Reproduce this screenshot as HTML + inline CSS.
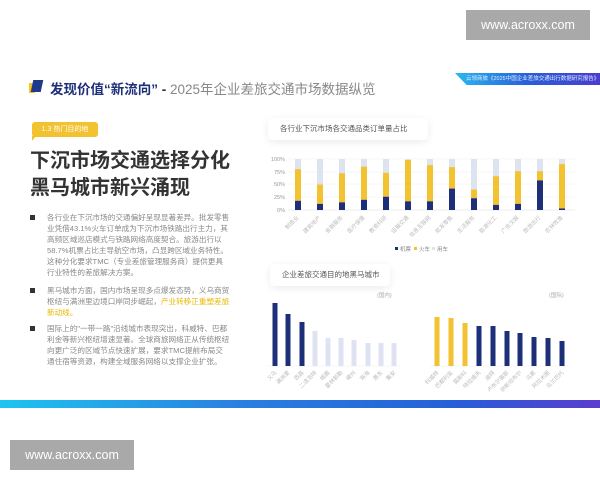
<!DOCTYPE html>
<html><head><meta charset="utf-8"><style>
body{margin:0;width:600px;height:480px;background:#fff;position:relative;overflow:hidden;font-family:"Liberation Sans","Noto Sans CJK SC",sans-serif;}
.abs{position:absolute;}
.wm{background:#a9a9a9;color:#fff;font-size:12.5px;text-align:center;line-height:30px;}
.bul{position:absolute;left:30px;width:200px;font-size:7.6px;line-height:11px;color:#888;}
.bul i{position:absolute;left:0;top:3px;width:5px;height:5px;background:#333;}
.bul p{margin:0 0 0 17px;}
</style></head><body>
<div class="abs wm" style="left:466px;top:10px;width:124px;height:30px;">www.acroxx.com</div>
<div class="abs wm" style="left:10px;top:440px;width:124px;height:30px;">www.acroxx.com</div>

<div class="abs" style="left:29px;top:83px;width:6px;height:10px;background:#f5c518;"></div>
<div class="abs" style="left:32px;top:80px;width:10px;height:12px;background:#1e3a8a;transform:skewX(-12deg);"></div>
<div class="abs" style="left:50px;top:78px;font-size:13.5px;white-space:nowrap;color:#888;"><b style="color:#1e2f7a;">发现价值“新流向”</b> <b style="color:#333">-</b> 2025年企业差旅交通市场数据纵览</div>
<div class="abs" style="left:455px;top:73px;width:145px;height:12px;background:linear-gradient(90deg,#2bb7f0,#2a5fd8,#4b3ccf);clip-path:polygon(0 0,100% 0,100% 100%,8% 100%);"></div>
<div class="abs" style="left:466px;top:74px;font-size:5.5px;color:#dfefff;white-space:nowrap;">云领商旅《2025中国企业差旅交通出行数据研究报告》</div>

<div class="abs" style="left:32px;top:122px;width:66px;height:15px;background:#f2c230;border-radius:3px;color:#fff;font-size:7px;line-height:15px;text-align:center;">1.3 热门目的地</div>
<div class="abs" style="left:32px;top:136px;width:0;height:0;border-left:4px solid #f2c230;border-bottom:5px solid transparent;"></div>
<div class="abs" style="left:30px;top:148px;font-size:20px;font-weight:bold;color:#333;line-height:27px;white-space:nowrap;">下沉市场交通选择分化<br>黑马城市新兴涌现</div>

<div class="bul" style="top:212px;"><i></i><p>各行业在下沉市场的交通偏好呈现显著差异。批发零售业凭借43.1%火车订单成为下沉市场铁路出行主力，其高频区域巡店模式与铁路网络高度契合。旅游出行以58.7%机票占比主导航空市场，凸显跨区域业务特性。这种分化要求TMC（专业差旅管理服务商）提供更具行业特性的差旅解决方案。</p></div>
<div class="bul" style="top:285px;"><i></i><p>黑马城市方面，国内市场呈现多点爆发态势，义乌商贸枢纽与满洲里边境口岸同步崛起，<span style="color:#e8b800">产业转移正重塑差旅新动线。</span></p></div>
<div class="bul" style="top:323px;"><i></i><p>国际上的"一带一路"沿线城市表现突出，科威特、巴都利金等新兴枢纽增速显著。全球商旅网络正从传统枢纽向更广泛的区域节点快速扩展，要求TMC提前布局交通住宿等资源，构建全域服务网络以支撑企业扩张。</p></div>

<div class="abs" style="left:268px;top:118px;width:160px;height:22px;background:#fff;box-shadow:0 2px 8px rgba(0,0,0,.08);border-radius:4px;font-size:7.5px;color:#555;line-height:22px;padding-left:12px;box-sizing:border-box;">各行业下沉市场各交通品类订单量占比</div>
<div class="abs" style="left:270px;top:264px;width:120px;height:22px;background:#fff;box-shadow:0 2px 8px rgba(0,0,0,.08);border-radius:4px;font-size:7.5px;color:#555;line-height:22px;padding-left:12px;box-sizing:border-box;">企业差旅交通目的地黑马城市</div>

<svg class="abs" style="left:0;top:0" width="600" height="480" font-family="Liberation Sans,Noto Sans CJK SC,sans-serif">
<g font-size="5.5" fill="#999" text-anchor="end">
<text x="285" y="161">100%</text><text x="285" y="174">75%</text><text x="285" y="186">50%</text><text x="285" y="199">25%</text><text x="285" y="212">0%</text>
</g>
<g stroke="#eee" stroke-width="0.5"><line x1="288" y1="159" x2="575" y2="159"/><line x1="288" y1="172" x2="575" y2="172"/><line x1="288" y1="184" x2="575" y2="184"/><line x1="288" y1="197" x2="575" y2="197"/><line x1="288" y1="210" x2="575" y2="210" stroke="#ddd"/></g>
<g id="c1"></g>
<g font-size="7" fill="#bbb" text-anchor="end" id="l1"></g>
<g font-size="5.5" fill="#888"><rect x="395" y="247" width="3" height="3" fill="#1e2f7a"/><text x="400" y="251">机票</text><rect x="414" y="247" width="3" height="3" fill="#f2c230"/><text x="419" y="251">火车</text><rect x="432" y="247" width="3" height="3" fill="#dde3ef"/><text x="437" y="251">用车</text></g>
<text x="377" y="297" font-size="5.5" fill="#aaa">(国内)</text>
<text x="549" y="297" font-size="5.5" fill="#aaa">(国际)</text>
<line x1="268" y1="366" x2="400" y2="366" stroke="#eee" stroke-width="0.5"/>
<line x1="430" y1="366" x2="568" y2="366" stroke="#eee" stroke-width="0.5"/>
<g id="c2"></g>
</svg>
<div class="abs" style="left:0;top:400px;width:600px;height:8px;background:linear-gradient(90deg,#1ec4f0,#2a7fe0 40%,#2560d8 75%,#5a3ccf);"></div>
<script>
var ns="http://www.w3.org/2000/svg";
function el(g,t,a,txt){var e=document.createElementNS(ns,t);for(var k in a)e.setAttribute(k,a[k]);if(txt)e.textContent=txt;g.appendChild(e);}
var d=[[18,80],[12,50],[15,72],[20,85],[26,73],[17,98],[17,88],[42,84],[23,40],[10,66],[12,76],[58,76],[3,90]];
var n1=["制造业","建筑地产","金融服务","医疗保健","教育科研","运输交通","信息互联网","批发零售","生活服务","能源化工","广告文娱","旅游出行","农林牧渔"];
var g=document.getElementById("c1"),l=document.getElementById("l1");
d.forEach(function(v,i){var x=295+22*i,H=51,b=210;
el(g,"rect",{x:x,y:159,width:6,height:H,fill:"#dde3ef"});
el(g,"rect",{x:x,y:b-H*v[1]/100,width:6,height:H*(v[1]-v[0])/100,fill:"#f2c230"});
el(g,"rect",{x:x,y:b-H*v[0]/100,width:6,height:H*v[0]/100,fill:"#1e2f7a"});
el(l,"text",{x:x+4,y:218,transform:"rotate(-45 "+(x+4)+" 218)","font-size":"5.5"},n1[i]);});
var g2=document.getElementById("c2");
var L=[[275,303],[288,314],[302,322],[315,331],[328,338],[341,338],[354,340],[368,343],[381,343],[394,343]];
var ln=["义乌","满洲里","西昌","二连浩特","峨眉","霍林郭勒","嵊州","珠海","惠东","集安"];
L.forEach(function(v,i){el(g2,"rect",{x:v[0]-2.5,y:v[1],width:5,height:366-v[1],fill:i<3?"#1e2f7a":"#dfe2f2"});
el(g2,"text",{x:v[0]+2,y:373,transform:"rotate(-45 "+(v[0]+2)+" 373)","font-size":"5.5",fill:"#bbb","text-anchor":"end"},ln[i]);});
var R=[[437,317],[451,318],[465,323],[479,326],[493,326],[507,331],[520,333],[534,337],[548,338],[562,341]];
var rn=["科威特","巴都利金","莫斯科","特拉维夫","迪拜","卢布尔雅那","伊斯坦布尔","马累","阿拉木图","乌兰巴托"];
R.forEach(function(v,i){el(g2,"rect",{x:v[0]-2.5,y:v[1],width:5,height:366-v[1],fill:i<3?"#f2c230":"#1e2f7a"});
el(g2,"text",{x:v[0]+2,y:373,transform:"rotate(-45 "+(v[0]+2)+" 373)","font-size":"5.5",fill:"#bbb","text-anchor":"end"},rn[i]);});
</script>
</body></html>
